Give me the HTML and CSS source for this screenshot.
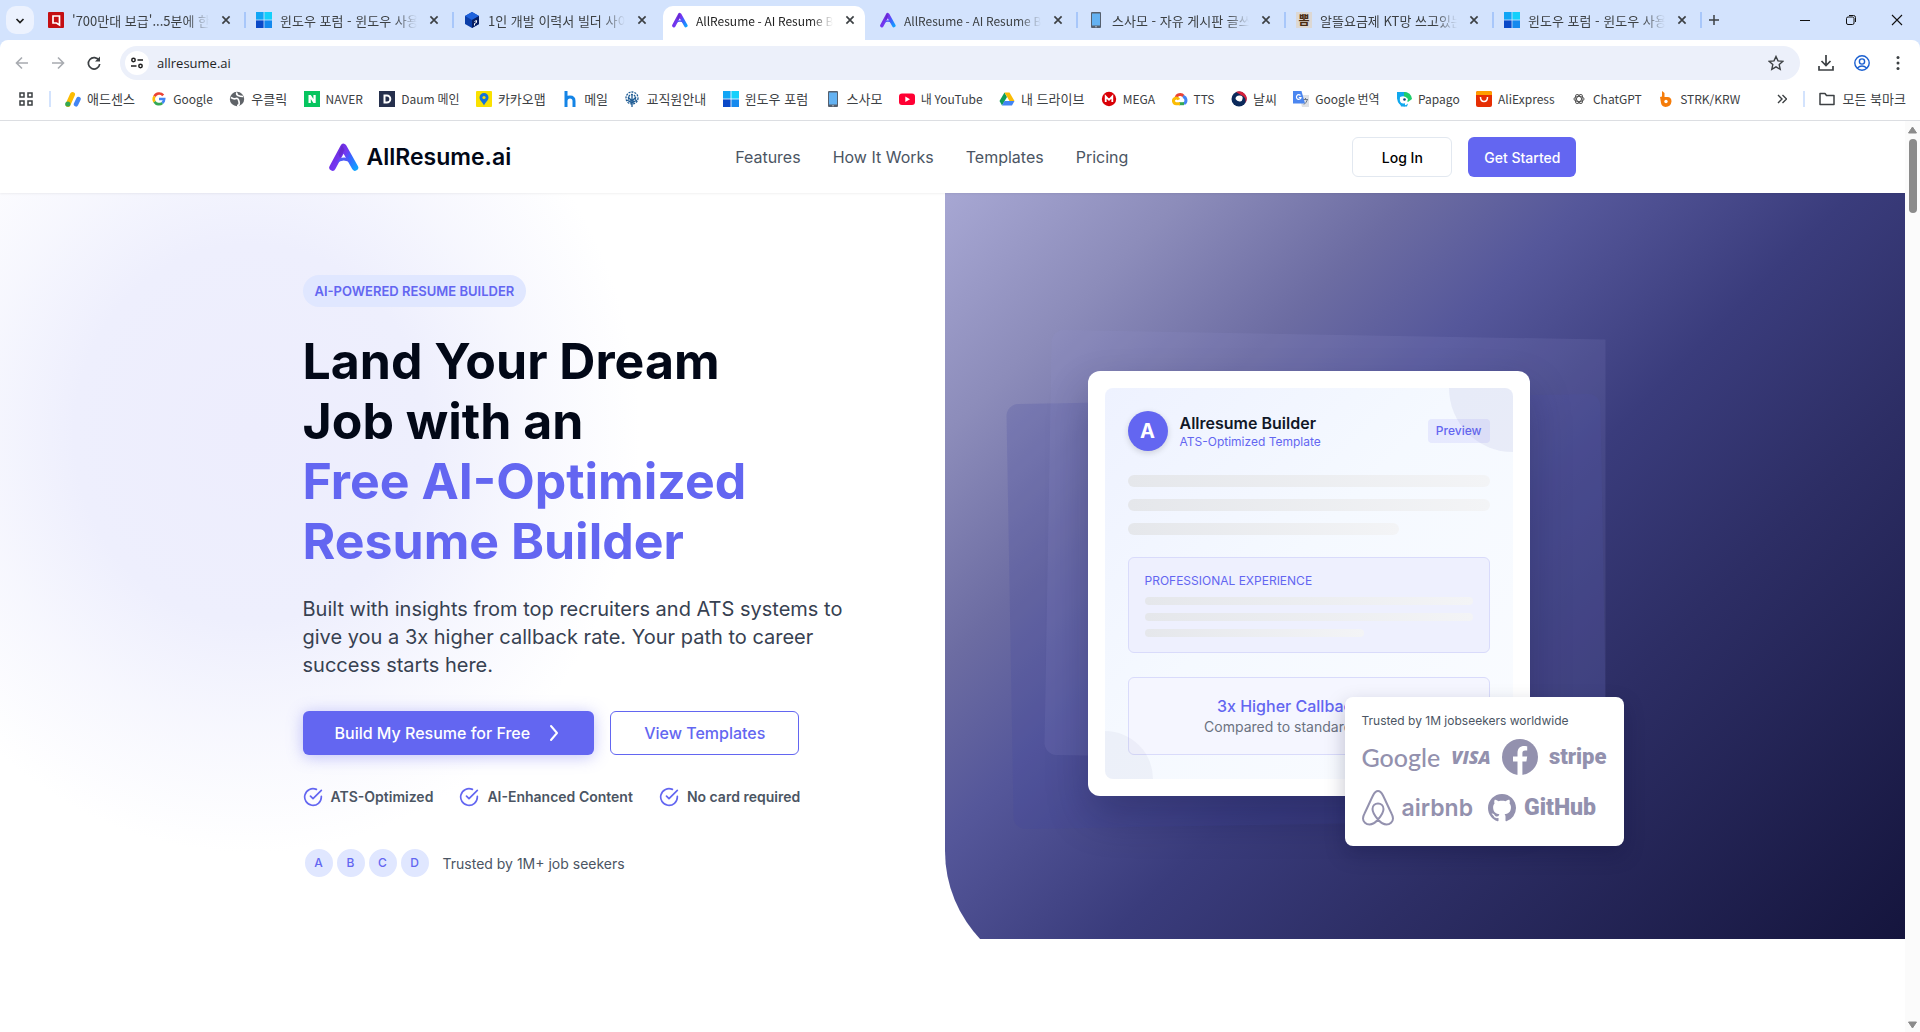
FILE: index.html
```
<!DOCTYPE html>
<html lang="en">
<head>
    <meta charset="UTF-8">
    <meta name="viewport" content="width=device-width, initial-scale=1.0">
    <title>AllResume - AI Resume Builder</title>
    <link rel="stylesheet" href="styles.css">
</head>
<body>
    <!-- shared icons -->
    <svg class="sprite" width="0" height="0" aria-hidden="true">
        <defs>
            <linearGradient id="logo-grad" gradientUnits="userSpaceOnUse" x1="4" y1="6" x2="29" y2="24">
                <stop offset="0" stop-color="#6d28d9"/>
                <stop offset="0.4" stop-color="#7438f2"/>
                <stop offset="0.6" stop-color="#3b62ff"/>
                <stop offset="1" stop-color="#0ea5ff"/>
            </linearGradient>
        </defs>
        <symbol id="i-logo" viewBox="0 0 30 28">
            <path d="M3.500 24.500 14.500 4 26 24.500" fill="none" stroke="url(#logo-grad)" stroke-width="6.500" stroke-linecap="round" stroke-linejoin="round"/>
            <path d="M8 20 Q14.500 15 22 20 L19.500 15.500 Q15 13.500 11 15.500 Z" fill="#4f5bf7"/>
            <path d="M13 2 15.500 7 11 15 9.500 11Z" fill="#5b21b6" opacity=".5"/>
        </symbol>
        <symbol id="i-windows" viewBox="0 0 16 16">
            <path fill="#10a5f5" d="M0 0h7.600v7.600H0z"/><path fill="#14d0fb" d="M8.400 0H16v7.600H8.400z"/>
            <path fill="#0a49c8" d="M0 8.400h7.600V16H0z"/><path fill="#1489ee" d="M8.400 8.400H16V16H8.400z"/>
        </symbol>
        <symbol id="i-phone" viewBox="0 0 16 16">
            <rect x="3" y="0" width="10" height="16" rx="1" fill="#56606e"/><rect x="4" y="1.500" width="8" height="12" fill="#64b2f2"/><circle cx="8" cy="14.700" r=".7" fill="#c9d3dd"/>
        </symbol>
        <symbol id="i-close" viewBox="0 0 10 10"><path d="M2 2l6 6m0-6l-6 6" stroke="#3c4043" stroke-width="1.400" fill="none"/></symbol>
        <symbol id="i-check" viewBox="0 0 24 24"><path d="M22 11.080V12a10 10 0 1 1-5.930-9.140M22 4 12 14.010l-3-3" fill="none" stroke="#6366f1" stroke-width="2" stroke-linecap="round" stroke-linejoin="round"/></symbol>
    </svg>

    <div class="tab-bar">
        <button class="tab-search" aria-label="Search tabs"><svg width="10" height="10" viewBox="0 0 10 10"><path d="M1.500 3 5 6.500 8.500 3" fill="none" stroke="#1f1f1f" stroke-width="1.700"/></svg></button>
        <ul class="tabs">
            <li class="tab">
                <svg class="favicon" viewBox="0 0 16 16"><rect width="16" height="16" rx="1" fill="#c40f12"/><path d="M5 4h6.500v9L8.500 11H5z" fill="none" stroke="#fff" stroke-width="1.700"/></svg>
                <span class="tab-title" lang="ko">'700만대 보급'...5분에 한 대씩</span>
                <button class="tab-close" aria-label="Close"><svg><use href="#i-close"/></svg></button>
            </li>
            <li class="tab">
                <svg class="favicon"><use href="#i-windows"/></svg>
                <span class="tab-title" lang="ko">윈도우 포럼 - 윈도우 사용기</span>
                <button class="tab-close" aria-label="Close"><svg><use href="#i-close"/></svg></button>
            </li>
            <li class="tab no-line">
                <svg class="favicon" viewBox="0 0 16 16"><path d="M8 0l7 4v8l-7 4-7-4V4z" fill="#0b3ea8"/><path d="M8 0l7 4-7 4-7-4z" fill="#1e62dd"/><path d="M8 8l7-4v8l-7 4z" fill="#071f63"/><path d="M10.500 9.500l2-1v2l-2 1v2" fill="none" stroke="#fff"/></svg>
                <span class="tab-title" lang="ko">1인 개발 이력서 빌더 사이트</span>
                <button class="tab-close" aria-label="Close"><svg><use href="#i-close"/></svg></button>
            </li>
            <li class="tab active no-line">
                <svg class="favicon"><use href="#i-logo"/></svg>
                <span class="tab-title">AllResume - AI Resume Builder</span>
                <button class="tab-close" aria-label="Close"><svg><use href="#i-close"/></svg></button>
            </li>
            <li class="tab">
                <svg class="favicon"><use href="#i-logo"/></svg>
                <span class="tab-title">AllResume - AI Resume Builder</span>
                <button class="tab-close" aria-label="Close"><svg><use href="#i-close"/></svg></button>
            </li>
            <li class="tab">
                <svg class="favicon"><use href="#i-phone"/></svg>
                <span class="tab-title" lang="ko">스사모 - 자유 게시판 글쓰기</span>
                <button class="tab-close" aria-label="Close"><svg><use href="#i-close"/></svg></button>
            </li>
            <li class="tab">
                <span class="favicon favicon-text">뽐</span>
                <span class="tab-title" lang="ko">알뜰요금제 KT망 쓰고있는데</span>
                <button class="tab-close" aria-label="Close"><svg><use href="#i-close"/></svg></button>
            </li>
            <li class="tab">
                <svg class="favicon"><use href="#i-windows"/></svg>
                <span class="tab-title" lang="ko">윈도우 포럼 - 윈도우 사용기</span>
                <button class="tab-close" aria-label="Close"><svg><use href="#i-close"/></svg></button>
            </li>
        </ul>
        <button class="tab-new" aria-label="New tab"><svg width="12" height="12" viewBox="0 0 12 12"><path d="M6 1v10M1 6h10" stroke="#3c4043" stroke-width="1.500"/></svg></button>
        <div class="window-buttons">
            <button aria-label="Minimize"><svg width="12" height="12" viewBox="0 0 12 12"><path d="M1 6.500h10" stroke="#111"/></svg></button>
            <button aria-label="Restore"><svg width="12" height="12" viewBox="0 0 12 12"><rect x="1.500" y="3" width="7.500" height="7.500" rx="1.500" fill="none" stroke="#111"/><path d="M4 1.500h4.500a2 2 0 0 1 2 2V8" fill="none" stroke="#111"/></svg></button>
            <button aria-label="Close window"><svg width="12" height="12" viewBox="0 0 12 12"><path d="M1 1l10 10M11 1L1 11" stroke="#111" stroke-width="1.100"/></svg></button>
        </div>
    </div>

    <div class="toolbar">
        <button class="tool" aria-label="Back"><svg viewBox="0 0 16 16"><path d="M14 8H3M8 2.500 2.500 8 8 13.500" fill="none" stroke="#a8abb0" stroke-width="1.600"/></svg></button>
        <button class="tool" aria-label="Forward"><svg viewBox="0 0 16 16"><path d="M2 8h11M8 2.500 13.500 8 8 13.500" fill="none" stroke="#a8abb0" stroke-width="1.600"/></svg></button>
        <button class="tool" aria-label="Reload"><svg viewBox="0 0 16 16"><path d="M13 5.500A5.700 5.700 0 1 0 13.700 9" fill="none" stroke="#3c4043" stroke-width="1.700"/><path d="M14 1.500V6.500H9z" fill="#3c4043"/></svg></button>
        <div class="omnibox">
            <button class="site-info" aria-label="Site information"><svg width="14" height="14" viewBox="0 0 14 14" fill="none" stroke="#1f1f1f" stroke-width="1.500"><circle cx="3.500" cy="4" r="1.700"/><path d="M7.500 4H13M1 10h5.500"/><circle cx="10.500" cy="10" r="1.700"/></svg></button>
            <input class="url" type="text" value="allresume.ai" aria-label="Address">
            <button class="star" aria-label="Bookmark this tab"><svg width="16" height="16" viewBox="0 0 16 16"><path d="M8 1.500l2 4.400 4.700.5-3.500 3.200 1 4.700L8 11.900l-4.200 2.400 1-4.700L1.300 6.400 6 5.900z" fill="none" stroke="#3c4043" stroke-width="1.400"/></svg></button>
        </div>
        <div class="toolbar-right">
            <button class="tool" aria-label="Downloads"><svg viewBox="0 0 16 16"><path d="M8 0v10M3.500 6 8 10.500 12.500 6M1 11v4h14v-4" fill="none" stroke="#3c4043" stroke-width="1.700"/></svg></button>
            <button class="tool" aria-label="Profile"><svg viewBox="0 0 16 16" fill="none" stroke="#1a5fd0" stroke-width="1.400"><circle cx="8" cy="8" r="7.200"/><circle cx="8" cy="6.500" r="2.600"/><path d="M3.300 13q4.700-4 9.400 0"/></svg></button>
            <button class="tool" aria-label="Menu"><svg viewBox="0 0 16 16" fill="#3c4043"><circle cx="8" cy="2.500" r="1.500"/><circle cx="8" cy="8" r="1.500"/><circle cx="8" cy="13.500" r="1.500"/></svg></button>
        </div>
    </div>

    <div class="bookmarks">
        <button class="apps" aria-label="Apps"><svg width="14" height="14" viewBox="0 0 14 14" fill="none" stroke="#3c4043" stroke-width="1.500"><path d="M1 1h4v4H1zM9 1h4v4H9zM1 9h4v4H1zM9 9h4v4H9z"/></svg></button>
        <span class="divider"></span>
        <ul class="bookmark-list">
            <li lang="ko"><a href="#"><svg viewBox="0 0 16 16"><path d="M3 13.500 7.500 3.500" stroke="#fbbc04" stroke-width="5" stroke-linecap="round"/><path d="M11 13.300 13.500 8" stroke="#4285f4" stroke-width="4.500" stroke-linecap="round"/><circle cx="2.800" cy="13" r="2.600" fill="#34a853"/></svg>애드센스</a></li>
            <li><a href="#"><svg viewBox="0 0 16 16" fill="none" stroke-width="2.600"><path d="M12.200 4.400A5.200 5.200 0 0 0 3.500 5.300" stroke="#ea4335"/><path d="M3.500 5.300a5.200 5.200 0 0 0 0 5.400" stroke="#fbbc05"/><path d="M3.500 10.700a5.200 5.200 0 0 0 7.800 1.200" stroke="#34a853"/><path d="M11.300 11.900A5.200 5.200 0 0 0 13.200 8H8" stroke="#4285f4"/></svg>Google</a></li>
            <li lang="ko"><a href="#"><svg viewBox="0 0 16 16"><circle cx="8" cy="8" r="7.200" fill="#5f6368"/><path d="M2 6.500q3 2 5 1t3 3-2 4M8 1.500q-1 2 1 3t5 1" stroke="#fff" stroke-width="1.700" fill="none"/></svg>우클릭</a></li>
            <li><a href="#"><svg viewBox="0 0 16 16"><path fill="#06c55f" d="M0 0h16v16H0z"/><path d="M4.500 12V4h2.300l2.600 4V4h2.300v8H9.400L6.800 8v4z" fill="#fff"/></svg>NAVER</a></li>
            <li><a href="#"><svg viewBox="0 0 16 16"><path fill="#26304d" d="M0 0h16v16H0z"/><path d="M5.500 4.500h2.300a3.500 3.500 0 0 1 0 7H5.500z" stroke="#fff" stroke-width="2" fill="none"/></svg>Daum 메인</a></li>
            <li lang="ko"><a href="#"><svg viewBox="0 0 16 16"><rect width="16" height="16" rx="1" fill="#fae100"/><path d="M8 2a4.500 4.500 0 0 1 4.500 4.500C12.500 9.500 9.500 11 8 14.500 6.500 11 3.500 9.500 3.500 6.500A4.500 4.500 0 0 1 8 2z" fill="#1672d8"/><circle cx="8" cy="6.500" r="1.600" fill="#fae100"/></svg>카카오맵</a></li>
            <li lang="ko"><a href="#"><svg viewBox="0 0 16 16"><path d="M4 0v16M4 10q0-4 4-4t4 4v6" stroke="#1484e6" stroke-width="3" fill="none"/></svg>메일</a></li>
            <li lang="ko"><a href="#"><svg viewBox="0 0 16 16" fill="none" stroke="#1f5c94" stroke-width="1.300"><circle cx="8" cy="7" r="6" stroke-dasharray="2 1"/><circle cx="8" cy="7" r="3.500" stroke-dasharray="2 1"/><path d="M8 4v12M4 6l4 4 4-4M3 9l5 3 5-3"/></svg>교직원안내</a></li>
            <li lang="ko"><a href="#"><svg><use href="#i-windows"/></svg>윈도우 포럼</a></li>
            <li lang="ko"><a href="#"><svg><use href="#i-phone"/></svg>스사모</a></li>
            <li><a href="#"><svg viewBox="0 0 16 16"><rect y="2.500" width="16" height="11.500" rx="3" fill="#f03"/><path d="M6.300 5.500v5.500l4.700-2.700z" fill="#fff"/></svg>내 YouTube</a></li>
            <li lang="ko"><a href="#"><svg viewBox="0 0 16 16"><path fill="#0f9d58" d="M5.500 1.500 8 6l-5 8.500L.5 10z"/><path fill="#fbbc04" d="M5.500 1.500h5L15.500 10h-5z"/><path fill="#4285f4" d="M5.500 10h10L13 14.500H3z"/></svg>내 드라이브</a></li>
            <li><a href="#"><svg viewBox="0 0 16 16"><circle cx="8" cy="8" r="7.200" fill="#d90007"/><path d="M4.700 11V5.500L8 8.800l3.300-3.300V11" stroke="#fff" stroke-width="1.800" fill="none"/></svg>MEGA</a></li>
            <li><a href="#"><svg viewBox="0 0 16 16" fill="none" stroke-width="3"><path d="M4 7a4.200 4.200 0 0 1 7.500-1.800" stroke="#ea4335"/><path d="M11 5.500a4 4 0 0 1 1 7.300" stroke="#4285f4"/><path d="M12 12.700H7" stroke="#34a853"/><path d="M8 12.700H4.300a2.800 2.800 0 1 1 2.500-4" stroke="#fbbc05"/></svg>TTS</a></li>
            <li lang="ko"><a href="#"><svg viewBox="0 0 16 16"><circle cx="8" cy="8" r="7.500" fill="#0b2a5b"/><path d="M5 1a7.500 7.500 0 0 1 9 11.500A6 6 0 0 0 10 4z" fill="#d6213c"/><path d="M4.500 8q0-3.500 4-3.500t3 3.500q-.5 3-3 2.500T4.500 8z" fill="#fff"/></svg>날씨</a></li>
            <li><a href="#"><svg viewBox="0 0 16 16"><path fill="#dfe1e5" d="M6 4h10v12H9z"/><path fill="#4b86f0" d="M0 0h8.500l3.500 12.500H0z"/><path d="M7.500 4.500a2.300 2.300 0 1 0 .5 2H5.800" stroke="#fff" stroke-width="1.200" fill="none"/><path d="M10.500 8.500h4.500M12.500 7v1.500M14.500 8.500q-1 3-3.500 5" stroke="#6b7785" fill="none"/></svg>Google 번역</a></li>
            <li><a href="#"><svg viewBox="0 0 16 16"><path d="M1 1h8q5 1 5 7H9v7.500q-7-.500-8-8z" fill="#10a8ee"/><path d="M8 1q7 0 8 7l-4 3-4-4z" fill="#1fce6d"/><path d="M4 6q5-2 8 2-1 5-5 4.500T4 6z" fill="#fff"/><circle cx="8.500" cy="8.500" r="1.300" fill="#123d7a"/><path d="M4 12.500q4 4 8 0l-1 3H5z" fill="#10a8ee"/></svg>Papago</a></li>
            <li><a href="#"><svg viewBox="0 0 16 16"><rect width="16" height="16" rx="2" fill="#e62e04"/><path d="M0 4V2q0-2 2-2h12q2 0 2 2v2z" fill="#ff9d00"/><path d="M4.500 6q0 4.500 3.500 4.500T11.500 6" fill="none" stroke="#fff" stroke-width="1.500"/></svg>AliExpress</a></li>
            <li><a href="#"><svg viewBox="0 0 16 16" fill="none" stroke="#555" stroke-width="1"><ellipse cx="8" cy="8" rx="5" ry="2.500"/><ellipse cx="8" cy="8" rx="5" ry="2.500" transform="rotate(60 8 8)"/><ellipse cx="8" cy="8" rx="5" ry="2.500" transform="rotate(120 8 8)"/></svg>ChatGPT</a></li>
            <li><a href="#"><svg viewBox="0 0 16 16"><path d="M4 0l2.500 2v4h3q4 0 4 4.500-.5 5-6 5.500-4-.5-4.500-4L2 6l2-.5z" fill="#f57c0a"/><circle cx="8" cy="10.500" r="1.700" fill="#fff"/></svg>STRK/KRW</a></li>
        </ul>
        <button class="overflow" aria-label="More bookmarks"><svg width="10" height="10" viewBox="0 0 10 10"><path d="M1 1l4 4-4 4M5.500 1l4 4-4 4" fill="none" stroke="#3c4043" stroke-width="1.400"/></svg></button>
        <span class="divider"></span>
        <a class="all-bookmarks" href="#" lang="ko"><svg width="16" height="14" viewBox="0 0 16 14"><path d="M1 12.500V1.500h5l1.500 2H15v9z" fill="none" stroke="#3c4043" stroke-width="1.500" stroke-linejoin="round"/></svg>모든 북마크</a>
    </div>

    <div class="viewport">
        <div class="page">
            <header class="header">
                <div class="header-inner">
                    <a class="brand" href="#"><svg width="30" height="28"><use href="#i-logo"/></svg>AllResume.ai</a>
                    <nav class="nav">
                        <a href="#">Features</a>
                        <a href="#">How It Works</a>
                        <a href="#">Templates</a>
                        <a href="#">Pricing</a>
                    </nav>
                    <div class="header-actions">
                        <button class="btn-login">Log In</button>
                        <button class="btn-start">Get Started</button>
                    </div>
                </div>
            </header>

            <section class="hero">
                <div class="hero-glow"></div>
                <div class="hero-panel"></div>
                <div class="hero-inner">
                    <div class="hero-copy">
                        <span class="badge">AI-POWERED RESUME BUILDER</span>
                        <h1>Land Your Dream<br>Job with an<br><span>Free AI-Optimized<br>Resume Builder</span></h1>
                        <p class="lead">Built with insights from top recruiters and ATS systems to give you a 3x higher callback rate. Your path to career success starts here.</p>
                        <div class="cta">
                            <button class="btn-primary">Build My Resume for Free <svg width="24" height="24" viewBox="0 0 24 24"><path d="M9 5l6 7-6 7" fill="none" stroke="#fff" stroke-width="2" stroke-linecap="round" stroke-linejoin="round"/></svg></button>
                            <button class="btn-outline">View Templates</button>
                        </div>
                        <ul class="checks">
                            <li><svg width="20" height="20"><use href="#i-check"/></svg>ATS-Optimized</li>
                            <li><svg width="20" height="20"><use href="#i-check"/></svg>AI-Enhanced Content</li>
                            <li><svg width="20" height="20"><use href="#i-check"/></svg>No card required</li>
                        </ul>
                        <div class="trust">
                            <span class="avatar">A</span><span class="avatar">B</span><span class="avatar">C</span><span class="avatar">D</span>
                            <span class="trust-text">Trusted by 1M+ job seekers</span>
                        </div>
                    </div>

                    <div class="hero-visual">
                        <div class="layers">
                            <div class="layer layer-back"></div>
                            <div class="layer layer-front"></div>
                        </div>
                        <div class="resume-card">
                            <div class="resume">
                                <div class="resume-head">
                                    <span class="resume-avatar">A</span>
                                    <div class="resume-name">
                                        <strong>Allresume Builder</strong>
                                        <span>ATS-Optimized Template</span>
                                    </div>
                                    <span class="preview">Preview</span>
                                </div>
                                <div class="lines">
                                    <div class="line"></div>
                                    <div class="line"></div>
                                    <div class="line line-short"></div>
                                </div>
                                <div class="experience">
                                    <span>PROFESSIONAL EXPERIENCE</span>
                                    <div class="line-sm"></div>
                                    <div class="line-sm"></div>
                                    <div class="line-sm line-sm-short"></div>
                                </div>
                                <div class="callback">
                                    <strong>3x Higher Callback Rate</strong>
                                    <span>Compared to standard resumes</span>
                                </div>
                            </div>
                        </div>
                        <div class="trusted-card">
                            <p>Trusted by 1M jobseekers worldwide</p>
                            <div class="logos">
                                <span class="logo-google">Google</span>
                                <span class="logo-visa">VISA</span>
                                <svg width="36" height="36" viewBox="0 0 36 36"><circle cx="18" cy="18" r="18" fill="#9391ae"/><path d="M15.500 36V22.500H11V17.500h4.500V14c0-4.500 2.600-7 6.700-7 1.500 0 3 .3 3 .3v4.300h-2c-2.200 0-2.800 1.300-2.800 2.700v3.200h4.800l-.8 5h-4V36z" fill="#fff"/></svg>
                                <span class="logo-stripe">stripe</span>
                            </div>
                            <div class="logos logos-bottom">
                                <svg width="32" height="36" viewBox="0 0 32 36" fill="none" stroke="#9391ae" stroke-width="2"><path d="M16 29.500C12.500 25.500 10.500 22 10.500 19c0-3.500 2.500-5.500 5.500-5.500s5.500 2 5.500 5.500c0 3-2 6.500-5.500 10.500-3 3.500-5.500 5-8.500 5-3.500 0-6.500-2.700-6.500-6 0-2 .7-3.500 1.500-5C5.500 17.500 8 11.500 11 5.500 12.500 2.500 14 1 16 1s3.500 1.500 5 4.500c3 6 5.500 12 8.500 18 .8 1.500 1.500 3 1.500 5 0 3.300-3 6-6.500 6-3 0-5.500-1.500-8.500-5z"/></svg>
                                <span class="logo-airbnb">airbnb</span>
                                <svg class="octocat" width="28" height="28" viewBox="0 0 16 16" fill="#9391ae"><path d="M8 0C3.580 0 0 3.580 0 8c0 3.540 2.290 6.530 5.470 7.590.4.070.55-.17.55-.38 0-.19-.01-.82-.01-1.490-2.010.37-2.530-.49-2.690-.94-.09-.23-.48-.94-.82-1.130-.28-.15-.68-.52-.01-.53.63-.01 1.080.58 1.230.82.72 1.210 1.870.87 2.330.66.070-.52.28-.87.51-1.070-1.780-.2-3.640-.89-3.640-3.950 0-.87.31-1.590.82-2.150-.08-.2-.36-1.020.08-2.120 0 0 .67-.21 2.200.82.64-.18 1.320-.27 2-.27s1.360.09 2 .27c1.530-1.040 2.200-.82 2.200-.82.44 1.100.16 1.920.08 2.120.51.56.82 1.270.82 2.150 0 3.070-1.870 3.750-3.650 3.950.29.25.54.73.54 1.480 0 1.070-.01 1.930-.01 2.200 0 .21.15.46.55.38A8.010 8.010 0 0 0 16 8c0-4.420-3.580-8-8-8z"/></svg>
                                <span class="logo-github">GitHub</span>
                            </div>
                        </div>
                    </div>
                </div>
            </section>
        </div>
        <div class="scrollbar">
            <svg width="9" height="8" viewBox="0 0 9 8"><path d="M4.500 1 8.500 7h-8z" fill="#8b8b8b" stroke="#8b8b8b" stroke-linejoin="round"/></svg>
            <div class="thumb"></div>
            <svg width="9" height="8" viewBox="0 0 9 8"><path d="M4.500 7 .5 1h8z" fill="#8b8b8b" stroke="#8b8b8b" stroke-linejoin="round"/></svg>
        </div>
    </div>
</body>
</html>
```

FILE: styles.css
```
* {
    box-sizing: border-box;
}
body {
    margin: 0;
    height: 100vh;
    display: flex;
    flex-direction: column;
    overflow: hidden;
    background-color: #d3e3fd;
    font-family: Inter, sans-serif;
    color: #020817;
}
button {
    font: inherit;
    border: none;
    background: none;
    padding: 0;
    cursor: pointer;
}
a {
    color: inherit;
    text-decoration: none;
}
ul {
    list-style: none;
    margin: 0;
    padding: 0;
}
.sprite {
    position: absolute;
}

/* browser tabs */
.tab-bar {
    display: flex;
    align-items: center;
    height: 40px;
    padding-left: 6px;
    flex-shrink: 0;
    font: 12px "Noto Sans CJK KR", sans-serif;
    color: #3c4043;
}
.tab-search {
    width: 28px;
    height: 28px;
    border-radius: 10px;
    background-color: #ecf2fe;
}
.tabs {
    display: flex;
    align-self: stretch;
    margin-left: 2px;
}
.tab {
    display: flex;
    align-items: center;
    width: 208px;
    padding: 0 12px;
    position: relative;
}
.tab::after {
    content: "";
    position: absolute;
    right: -2px;
    top: 12px;
    width: 2px;
    height: 16px;
    background-color: #a8c7fa;
}
.tab.no-line::after {
    display: none;
}
.tab.active {
    color: #1f1f1f;
}
.tab.active::before {
    content: "";
    position: absolute;
    inset: 6px 3px 0;
    background-color: #fff;
    border-radius: 10px 10px 0 0;
}
.tab > * {
    position: relative;
}
.favicon {
    width: 16px;
    height: 16px;
    flex-shrink: 0;
}
.favicon-text {
    background-color: #ddd8d3;
    color: #4a2c12;
    font-weight: bold;
    line-height: 16px;
    text-align: center;
}
.tab-title {
    flex: 1;
    margin: 0 8px;
    white-space: nowrap;
    overflow: hidden;
    -webkit-mask-image: linear-gradient(to right, #000 82%, transparent 98%);
    mask-image: linear-gradient(to right, #000 82%, transparent 98%);
}
.tab-title:lang(ko),
.bookmarks :lang(ko) {
    font-size: 13px;
}
.tab-close {
    width: 12px;
    display: flex;
}
.tab-close svg {
    width: 12px;
    height: 12px;
}
.tab-new {
    width: 28px;
    height: 28px;
}
.window-buttons {
    display: flex;
    margin-left: auto;
}
.window-buttons button {
    width: 46px;
    height: 40px;
}

/* toolbar */
.toolbar {
    display: flex;
    align-items: center;
    height: 46px;
    flex-shrink: 0;
    padding: 0 4px;
    background-color: #fff;
    border-radius: 8px 8px 0 0;
}
.tool {
    width: 36px;
    height: 34px;
    display: flex;
    align-items: center;
    justify-content: center;
}
.tool svg {
    width: 16px;
    height: 16px;
}
.omnibox {
    display: flex;
    align-items: center;
    flex: 1;
    height: 34px;
    margin-left: 8px;
    padding: 0 16px 0 5px;
    border-radius: 17px;
    background-color: #ecf0fa;
}
.site-info {
    display: flex;
    align-items: center;
    justify-content: center;
    width: 24px;
    height: 24px;
    border-radius: 50%;
    background-color: #fff;
}
.url {
    flex: 1;
    margin-left: 8px;
    padding: 0;
    border: none;
    background: none;
    outline: none;
    font: 13px "Open Sans", sans-serif;
    color: #1f1f1f;
}
.star {
    display: flex;
}
.toolbar-right {
    display: flex;
    margin-left: 8px;
}

/* bookmarks */
.bookmarks {
    display: flex;
    align-items: center;
    height: 35px;
    flex-shrink: 0;
    padding: 0 14px 8px 19px;
    background-color: #fff;
    border-bottom: 1px solid #dcdee2;
    font: 12px/20px "Noto Sans CJK KR", sans-serif;
    color: #3c4043;
    white-space: nowrap;
}
.bookmarks button {
    display: flex;
}
.divider {
    width: 2px;
    height: 16px;
    margin: 0 14px 0 16px;
    background-color: #d3e3fd;
}
.bookmark-list {
    display: flex;
    flex: 1;
    justify-content: space-between;
}
.bookmark-list a {
    display: flex;
    align-items: center;
    gap: 6px;
}
.bookmark-list svg {
    width: 16px;
    height: 16px;
}
.overflow {
    margin-left: 36px;
}
.all-bookmarks {
    display: flex;
    align-items: center;
    gap: 8px;
}

/* page */
.viewport {
    display: flex;
    flex: 1;
    min-height: 0;
    background-color: #fff;
}
.page {
    flex: 1;
    min-width: 0;
    overflow: hidden;
}
.scrollbar {
    display: flex;
    flex-direction: column;
    align-items: center;
    width: 15px;
    padding: 5px 0 3px;
    background-color: #fbfbfb;
}
.thumb {
    width: 8px;
    height: 74px;
    margin: 5px 0 auto;
    border-radius: 4px;
    background-color: #8b8b8b;
}
.header {
    position: relative;
    z-index: 1;
    background-color: #fff;
    box-shadow: 0 1px 2px rgba(0,0,0,0.06);
}
.header-inner {
    display: flex;
    align-items: center;
    justify-content: space-between;
    max-width: 1280px;
    height: 72px;
    margin: 0 auto;
    padding: 0 16px;
}
.brand {
    display: flex;
    align-items: center;
    gap: 8px;
    font-size: 23px;
    font-weight: 600;
}
.nav {
    display: flex;
    gap: 32px;
    color: #4b5563;
}
.header-actions {
    display: flex;
    gap: 16px;
    font-size: 14px;
    font-weight: 500;
}
.btn-login {
    width: 100px;
    height: 40px;
    border: 1px solid #e2e8f0;
    border-radius: 6px;
}
.btn-start {
    height: 40px;
    padding: 0 16px;
    border-radius: 6px;
    background-color: #6366f1;
    color: #fff;
}

/* hero */
.hero {
    position: relative;
    overflow: hidden;
    padding: 82px 24px 60px;
}
.hero-glow {
    position: absolute;
    left: -140px;
    top: -180px;
    width: 780px;
    height: 840px;
    background: radial-gradient(closest-side, #ededfd 0%, #eeeffd 45%, rgba(238,239,253,0.5) 70%, rgba(255,255,255,0) 100%);
}
.hero-panel {
    position: absolute;
    right: 0;
    top: 0;
    bottom: -40px;
    width: 960px;
    border-bottom-left-radius: 128px;
    background: linear-gradient(135deg, #a7a7d3 0%, #8c8cba 14%, #6c6ca2 27%, #55579a 37%, #3a3c7c 52%, #2d2e65 67%, #13133a 100%);
}
.hero-inner {
    position: relative;
    display: grid;
    grid-template-columns: minmax(0, 1fr) minmax(0, 588px);
    align-items: center;
    max-width: 1300px;
    margin: 0 auto;
}
.hero-copy {
    max-width: 560px;
}
.badge {
    display: inline-block;
    padding: 0 12px;
    border-radius: 16px;
    background-color: #e0e7ff;
    color: #6366f1;
    font-size: 13px;
    font-weight: 600;
    line-height: 32px;
}
h1 {
    margin: 24px 0;
    font-size: 50px;
    font-weight: 700;
    line-height: 60px;
}
h1 span {
    color: #6366f1;
}
.lead {
    margin: 0 0 32px;
    color: #374151;
    font-size: 20px;
    line-height: 28px;
}
.cta {
    display: flex;
    gap: 16px;
}
.btn-primary,
.btn-outline {
    display: flex;
    align-items: center;
    height: 44px;
    padding: 0 32px;
    border-radius: 6px;
    font-size: 16px;
    font-weight: 500;
}
.btn-primary {
    gap: 12px;
    padding-right: 28px;
    background-color: #6366f1;
    color: #fff;
    box-shadow: 0 2px 16px rgba(99,102,241,0.4);
}
.btn-outline {
    padding: 0 33px;
    border: 1px solid #6366f1;
    background-color: #fff;
    color: #6366f1;
}
.checks {
    display: flex;
    gap: 26px;
    margin-top: 32px;
    color: #4b5563;
    font-size: 14px;
    font-weight: 600;
    line-height: 20px;
}
.checks li {
    display: flex;
    align-items: center;
    gap: 8px;
}
.trust {
    display: flex;
    align-items: center;
    margin-top: 40px;
    color: #4b5563;
    font-size: 14px;
}
.avatar {
    width: 32px;
    border: 2px solid #fff;
    border-radius: 50%;
    background-color: #e0e7ff;
    color: #6366f1;
    font-size: 12px;
    font-weight: 500;
    line-height: 28px;
    text-align: center;
}
.trust-text {
    margin-left: 12px;
}

/* resume mockup */
.hero-visual {
    position: relative;
    margin-top: 12px;
}
.layers {
    position: absolute;
    inset: 0 -3px;
    clip-path: inset(-80px 0 -80px -80px);
}
.layer {
    position: absolute;
    inset: 0;
    border-radius: 12px;
}
.layer-back {
    background-color: rgba(67,70,160,0.2);
    transform: translate(-2px, 28px) rotate(-1deg);
}
.layer-front {
    background-color: rgba(150,145,210,0.15);
    transform: translate(36px, -36px) rotate(1deg);
}
.resume-card {
    position: relative;
    max-width: 442px;
    margin: 0 auto;
    padding: 17px;
    border-radius: 12px;
    background-color: #fff;
    box-shadow: 0 20px 40px rgba(10,10,50,0.25);
}
.resume {
    position: relative;
    overflow: hidden;
    padding: 23px 23px 24px;
    border-radius: 8px;
    background: linear-gradient(135deg, #eef2ff, #f5f9ff 45%, #fafcff);
}
.resume::before,
.resume::after {
    content: "";
    position: absolute;
    background-color: rgba(99,102,180,0.09);
}
.resume::before {
    top: 0;
    right: 0;
    width: 64px;
    height: 64px;
    border-bottom-left-radius: 100%;
}
.resume::after {
    bottom: 0;
    left: 0;
    width: 48px;
    height: 48px;
    border-top-right-radius: 100%;
    background-color: rgba(99,102,160,0.06);
}
.resume-head {
    display: flex;
    align-items: center;
    gap: 12px;
}
.resume-avatar {
    width: 40px;
    border-radius: 50%;
    background-color: #6366f1;
    color: #fff;
    font-size: 20px;
    font-weight: 700;
    line-height: 40px;
    text-align: center;
    box-shadow: 0 2px 6px rgba(0,0,0,0.15);
}
.resume-name {
    display: flex;
    flex-direction: column;
    font-size: 12px;
    line-height: 16px;
    color: #6366f1;
}
.resume-name strong {
    color: #111827;
    font-size: 16px;
    font-weight: 600;
    line-height: 22px;
}
.preview {
    margin-left: auto;
    padding: 0 8px;
    border-radius: 4px;
    background-color: rgba(99,102,241,0.1);
    color: #6366f1;
    font-size: 12px;
    font-weight: 500;
    line-height: 24px;
}
.lines {
    display: grid;
    gap: 12px;
    margin: 24px 0 22px;
}
.line,
.line-sm {
    height: 12px;
    border-radius: 6px;
    background: linear-gradient(to right, #e5e7eb, #f3f4f6);
}
.line-short {
    width: 75%;
}
.experience,
.callback {
    border: 1px solid #d9dbfb;
    border-radius: 6px;
    background-color: #eef0fe;
}
.experience {
    display: grid;
    gap: 8px;
    padding: 15px 16px;
    color: #6366f1;
    font-size: 12px;
    line-height: 16px;
}
.line-sm {
    height: 8px;
}
.line-sm-short {
    width: 67%;
}
.callback {
    position: relative;
    display: flex;
    flex-direction: column;
    margin-top: 24px;
    padding: 17px 0;
    background-color: #f5f6ff;
    color: #6b7280;
    font-size: 14px;
    line-height: 20px;
    text-align: center;
}
.callback strong {
    color: #6366f1;
    font-size: 16px;
    font-weight: 500;
    line-height: 22px;
}
.trusted-card {
    position: absolute;
    right: -21px;
    bottom: -50px;
    width: 279px;
    padding: 16px 17px 20px;
    border-radius: 8px;
    background-color: #fff;
    box-shadow: 0 8px 20px rgba(10,10,50,0.25);
    color: #9391ae;
}
.trusted-card p {
    margin: 0 0 10px;
    color: #4b5563;
    font-size: 12px;
    line-height: 16px;
}
.logos {
    display: flex;
    align-items: center;
    justify-content: space-between;
    line-height: 36px;
}
.logos-bottom {
    justify-content: flex-start;
    gap: 8px;
    margin-top: 15px;
}
.octocat {
    margin-left: 7px;
}
.logo-google {
    font: 500 25px/36px Lato, sans-serif;
}
.logo-visa {
    font: italic 800 18px "Open Sans", sans-serif;
}
.logo-stripe {
    font: 900 22px Roboto, sans-serif;
}
.logo-airbnb {
    font: 600 23px Inter, sans-serif;
}
.logo-github {
    font: 900 23px Roboto, sans-serif;
}
```
